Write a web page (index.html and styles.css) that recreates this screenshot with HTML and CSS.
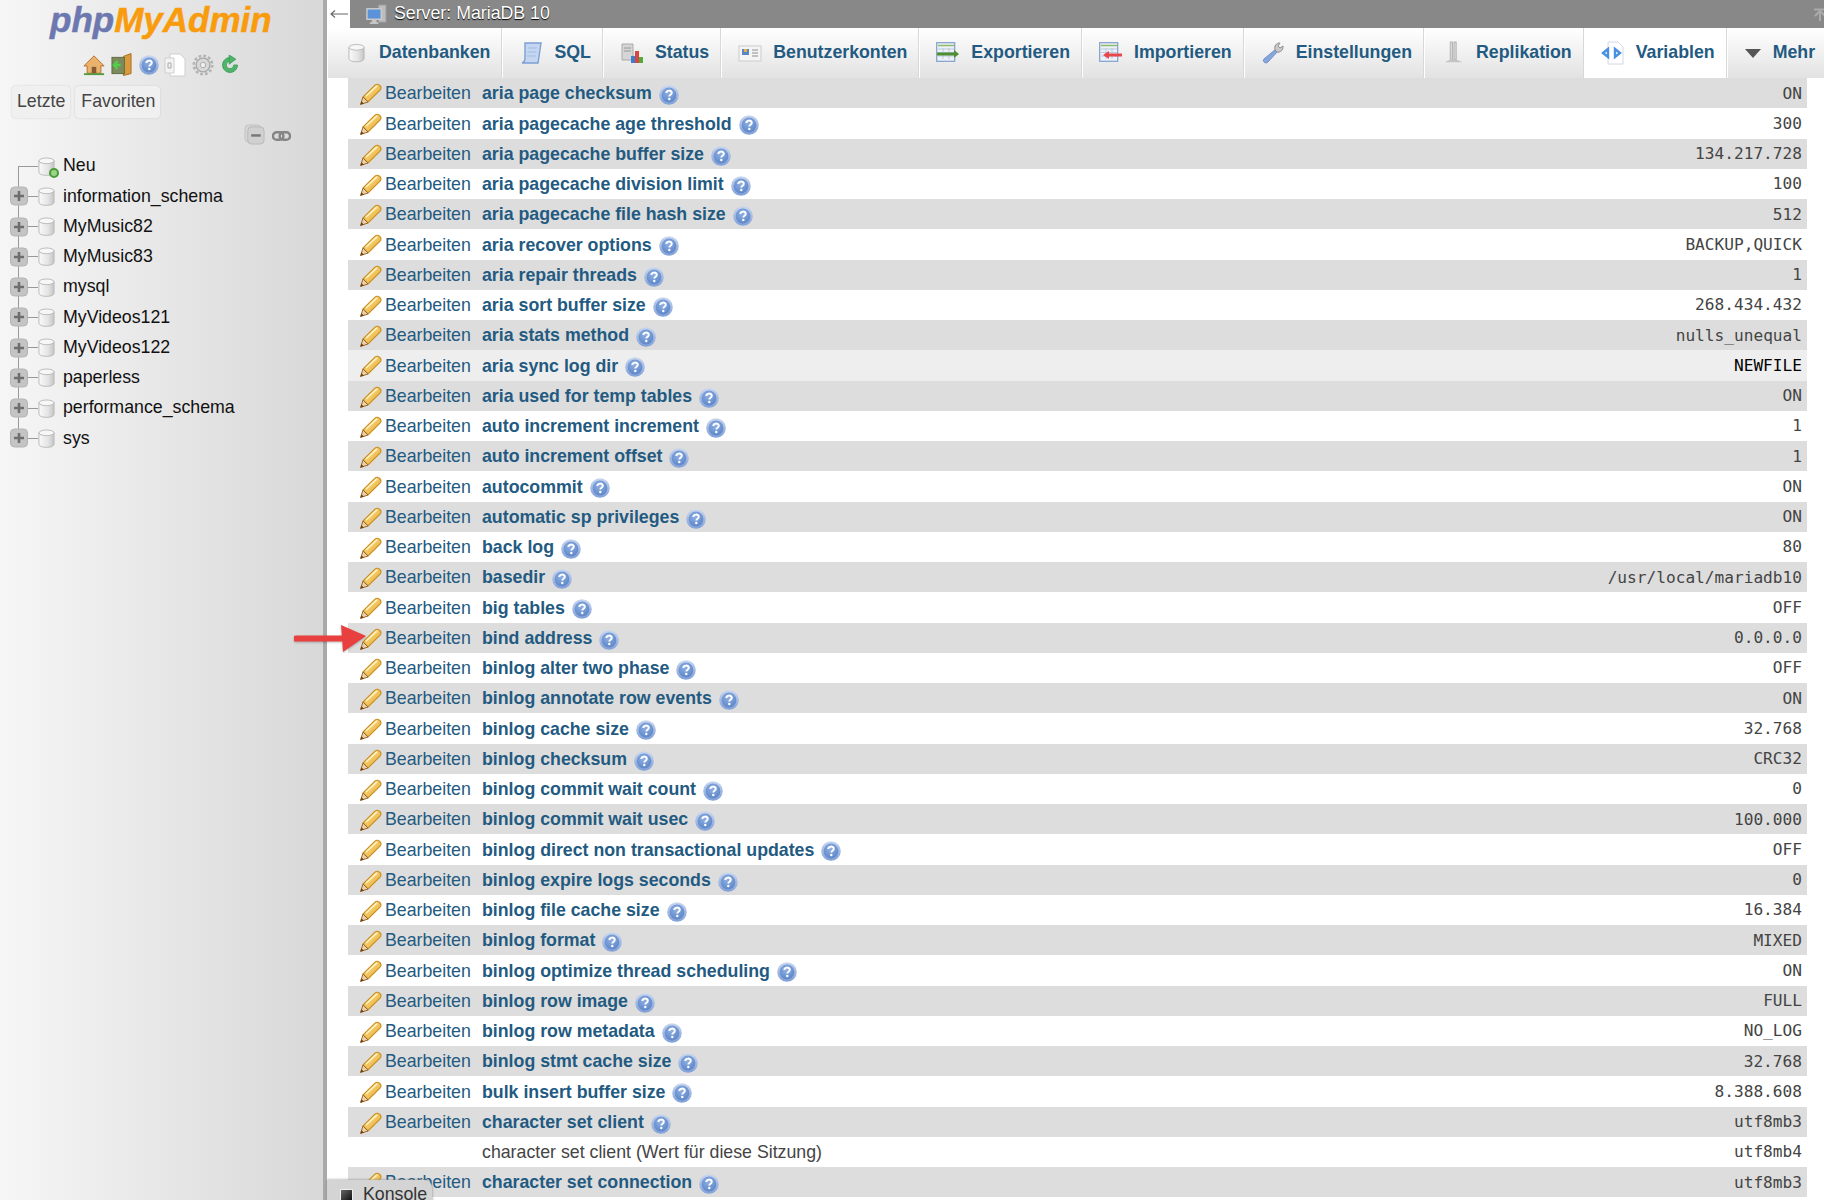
FILE: index.html
```html
<!DOCTYPE html>
<html lang="de">
<head>
<meta charset="utf-8">
<title>phpMyAdmin</title>
<link rel="stylesheet" href="styles.css">
</head>
<body>
<svg class="sprite" aria-hidden="true">
  <defs>
    <linearGradient id="gp" x1="0" y1="0" x2="1" y2="1"><stop offset="0" stop-color="#fde79a"/><stop offset="1" stop-color="#e6a428"/></linearGradient>
    <radialGradient id="gh" cx=".45" cy=".35" r=".7"><stop offset="0" stop-color="#8fb0e4"/><stop offset="1" stop-color="#5b84c6"/></radialGradient>
    <linearGradient id="ghr" x1="0" y1="0" x2="0" y2="1"><stop offset="0" stop-color="#c9d7ef"/><stop offset="1" stop-color="#7f9fd8"/></linearGradient>
    <linearGradient id="gd" x1="0" y1="0" x2="1" y2="0"><stop offset="0" stop-color="#fafafa"/><stop offset=".6" stop-color="#e4e4e4"/><stop offset="1" stop-color="#c4c4c4"/></linearGradient>
    <symbol id="i-pencil" viewBox="0 0 24 24">
      <path d="M4 15 16 3.200c1.500-1.500 3.500-1 4.800.3 1.400 1.400 1.700 3.300.2 4.700L9 20z" fill="url(#gp)" stroke="#c88d1e" stroke-width="1.100"/>
      <path d="M7 14 18 3.800" stroke="#fff3c4" stroke-width="1.600" fill="none"/>
      <path d="M4 15 1.500 22.500 9 20z" fill="#eccfa6" stroke="#9a6a2a" stroke-width="1"/>
      <path d="M1.500 22.500 2.500 19.200 4.800 21.500z" fill="#6b3d12"/>
    </symbol>
    <symbol id="i-help" viewBox="0 0 20 20">
      <circle cx="10" cy="10" r="9.800" fill="url(#ghr)"/>
      <circle cx="10" cy="10" r="7.400" fill="url(#gh)"/>
      <path d="M7.300 8c0-3.200 5.500-3.200 5.500-.2 0 1.900-2.500 1.800-2.500 3.600" fill="none" stroke="#fff" stroke-width="1.900"/>
      <circle cx="10.300" cy="14" r="1.200" fill="#fff"/>
    </symbol>
    <symbol id="i-db" viewBox="0 0 18 20">
      <path d="M1 4v12c0 4.500 16 4.500 16 0V4z" fill="url(#gd)" stroke="#b8b8b8"/>
      <ellipse cx="9" cy="4" rx="8" ry="3" fill="#f7f7f7" stroke="#b8b8b8"/>
    </symbol>
    <symbol id="i-plus" viewBox="0 0 18 20">
      <rect x=".5" y="1" width="17" height="18" rx="4" fill="#c4c4c4" stroke="#b4b4b4"/>
      <path d="M9 5v10M4 10h10" stroke="#6e6e6e" stroke-width="2.600"/>
    </symbol>
    <symbol id="i-sql" viewBox="0 0 22 24">
      <path d="M5 2h16l-3 20H2c3-1 3-3 3-5z" fill="#c4d6f0" stroke="#7d9fd4" stroke-width="1.400"/>
      <path d="M8 7h9M7.500 11h9M7 15h9" stroke="#a3bde4"/>
    </symbol>
    <symbol id="i-status" viewBox="0 0 24 24">
      <path d="M2 3h11v16H2z" fill="#d5d5d5" stroke="#aaa"/>
      <path d="M4 7h7M4 10h7" stroke="#999"/>
      <rect x="11" y="15" width="4" height="7" fill="#3c7fd0"/><rect x="15" y="10" width="4" height="12" fill="#d8453f"/><rect x="19" y="16" width="4" height="6" fill="#55a83a"/>
    </symbol>
    <symbol id="i-users" viewBox="0 0 24 20">
      <rect x="1" y="3" width="22" height="15" fill="#f4f4f4" stroke="#ccc"/>
      <rect x="4" y="6" width="7" height="6" fill="#5a86c8"/><rect x="6" y="6" width="3" height="3" fill="#e5b23d"/>
      <path d="M14 7h6M14 10h6M14 13h6" stroke="#b0b0b0" stroke-width="1.400"/>
    </symbol>
    <symbol id="i-table" viewBox="0 0 20 20">
      <rect x=".7" y=".7" width="18" height="18.600" fill="#eef2f8" stroke="#7f9fcb" stroke-width="1.200"/>
      <path d="M2 3.500h16" stroke="#8cbb6a" stroke-width="1.500"/>
      <path d="M2 7h16M2 10.500h16M2 14h16M7 6v11M13 6v11" stroke="#b8c8de"/>
    </symbol>
    <symbol id="i-export" viewBox="0 0 24 22">
      <use href="#i-table" x="0" y="0" width="20" height="20"/>
      <path d="M1 12h18" stroke="#4f8f2f" stroke-width="3"/><path d="M18 8l5 4-5 4z" fill="#4f8f2f"/>
    </symbol>
    <symbol id="i-import" viewBox="0 0 24 22">
      <use href="#i-table" x="0" y="0" width="20" height="20"/>
      <path d="M8 13h15" stroke="#e8474a" stroke-width="3"/><path d="M10 9l-6 4 6 4z" fill="#e8474a"/>
    </symbol>
    <symbol id="i-wrench" viewBox="0 0 24 24">
      <path d="M15 8 3 18c-2 2 1 5 3.500 3.500L17 10z" fill="#88a6de" stroke="#6f8fcb"/>
      <path d="M14 9c-1-4 1-7 5-7l-2 3 2 2 3-2c.5 4-3 7-6 6z" fill="#c9c9c9" stroke="#8e8e8e"/>
    </symbol>
    <symbol id="i-repl" viewBox="0 0 24 26">
      <path d="M9 1h2.500v19H9zM13 1h2.500v19H13z" fill="#d8d8d8" stroke="#a4a4a4" stroke-width=".8"/>
      <path d="M9 20h7l6 3H3z" fill="#c4c4c4"/>
    </symbol>
    <symbol id="i-vars" viewBox="0 0 24 24">
      <path d="M7 1h10l5 5v17H7z" fill="#fff" stroke="#d2d8e4"/>
      <path d="M7 8 2 12l5 4zM14 8l5 4-5 4z" fill="#fff" stroke="#4a90e0" stroke-width="2.400"/>
    </symbol>
    <symbol id="i-server" viewBox="0 0 22 22">
      <rect x="13" y="1" width="8" height="18" fill="#bdbdbd" stroke="#999"/>
      <rect x="1" y="5" width="15" height="11" fill="#5a93d8" stroke="#ccc" stroke-width="1.500"/>
      <path d="M6 16h5v3H6zM4 19h9v2H4z" fill="#c5c5c5"/>
    </symbol>
    <symbol id="i-home" viewBox="0 0 24 22">
      <path d="M12 1 1 12h3.500v8h15v-8H23z" fill="#e9b36e" stroke="#b66a25"/>
      <rect x="9.500" y="13" width="5" height="7" fill="#8a5a30"/>
      <path d="M1 21h22" stroke="#4f9a3c" stroke-width="2"/>
    </symbol>
    <symbol id="i-exit" viewBox="0 0 22 24">
      <path d="M13 3 21 0v21l-8 2z" fill="#d99a3e" stroke="#a86c1c"/>
      <rect x="1" y="4" width="13" height="17" fill="#7d8a5c" stroke="#5d6a40"/>
      <path d="M3 12h7M7 8l-4 4 4 4" fill="none" stroke="#4fd04a" stroke-width="2.400"/>
    </symbol>
    <symbol id="i-docs" viewBox="0 0 22 24">
      <path d="M6 1h10l5 5v17H6z" fill="#fff" stroke="#cfcfcf"/>
      <path d="M1 5h9v15H1z" fill="#f3f3f3" stroke="#cfcfcf"/>
      <path d="M4 10h3v5H4z" fill="none" stroke="#aaa"/>
    </symbol>
    <symbol id="i-gear" viewBox="0 0 24 24">
      <circle cx="12" cy="12" r="7.500" fill="#d8d8d8" stroke="#a8a8a8" stroke-width="1.500"/>
      <circle cx="12" cy="12" r="10" fill="none" stroke="#b4b4b4" stroke-width="3" stroke-dasharray="3 2.240"/>
      <circle cx="12" cy="12" r="3" fill="#eee" stroke="#a8a8a8"/>
    </symbol>
    <symbol id="i-reload" viewBox="0 0 20 24">
      <path d="M10 3a9 9 0 1 0 9 9h-4.500A4.500 4.500 0 1 1 10 7.500z" fill="#4fb56a" stroke="#3a9a55"/>
      <path d="M9 0l8 5-8 6z" fill="#4fb56a" stroke="#3a9a55"/>
    </symbol>
    <symbol id="i-collapse" viewBox="0 0 22 22">
      <rect x="1" y="1" width="17" height="18" rx="4" fill="#d6d6d6" stroke="#c0c0c0"/>
      <rect x="4" y="3" width="17" height="18" rx="4" fill="#d0d0d0" stroke="#b8b8b8"/>
      <path d="M7.500 12h10" stroke="#777" stroke-width="2.600"/>
    </symbol>
    <symbol id="i-link" viewBox="0 0 20 12">
      <rect x="1" y="2" width="11" height="8" rx="4" fill="none" stroke="#858585" stroke-width="2.600"/>
      <rect x="8" y="2" width="11" height="8" rx="4" fill="none" stroke="#858585" stroke-width="2.600"/>
    </symbol>
    <symbol id="i-back" viewBox="0 0 18 12">
      <path d="M1 6h17M5 2.500 1 6l4 3.500" fill="none" stroke="#666" stroke-width="1.100"/>
    </symbol>
    <symbol id="i-top" viewBox="0 0 12 14">
      <path d="M0 1.500h12M6 13V3M1 8l5-5 5 5" fill="none" stroke="#aaa" stroke-width="2"/>
    </symbol>
  </defs>
</svg>

<div class="app">
  <aside class="nav">
    <div class="logo"><span class="logo-php">php</span><span class="logo-my">MyAdmin</span></div>
    <div class="nav-icons">
      <svg class="ni ni-home"><use href="#i-home"/></svg>
      <svg class="ni ni-exit"><use href="#i-exit"/></svg>
      <svg class="ni ni-help"><use href="#i-help"/></svg>
      <svg class="ni ni-docs"><use href="#i-docs"/></svg>
      <svg class="ni ni-gear"><use href="#i-gear"/></svg>
      <svg class="ni ni-reload"><use href="#i-reload"/></svg>
    </div>
    <div class="nav-btns"><span class="nav-btn">Letzte</span><span class="nav-btn">Favoriten</span></div>
    <div class="nav-ctrl">
      <svg class="ctrl-collapse"><use href="#i-collapse"/></svg>
      <svg class="ctrl-link"><use href="#i-link"/></svg>
    </div>
    <ul class="tree">
      <li class="tree-row tree-first"><span class="exp"></span><span class="dbwrap"><svg class="dbi"><use href="#i-db"/></svg><span class="newdot"></span></span><span>Neu</span></li>
      <li class="tree-row"><svg class="exp"><use href="#i-plus"/></svg><svg class="dbi"><use href="#i-db"/></svg><span>information_schema</span></li>
      <li class="tree-row"><svg class="exp"><use href="#i-plus"/></svg><svg class="dbi"><use href="#i-db"/></svg><span>MyMusic82</span></li>
      <li class="tree-row"><svg class="exp"><use href="#i-plus"/></svg><svg class="dbi"><use href="#i-db"/></svg><span>MyMusic83</span></li>
      <li class="tree-row"><svg class="exp"><use href="#i-plus"/></svg><svg class="dbi"><use href="#i-db"/></svg><span>mysql</span></li>
      <li class="tree-row"><svg class="exp"><use href="#i-plus"/></svg><svg class="dbi"><use href="#i-db"/></svg><span>MyVideos121</span></li>
      <li class="tree-row"><svg class="exp"><use href="#i-plus"/></svg><svg class="dbi"><use href="#i-db"/></svg><span>MyVideos122</span></li>
      <li class="tree-row"><svg class="exp"><use href="#i-plus"/></svg><svg class="dbi"><use href="#i-db"/></svg><span>paperless</span></li>
      <li class="tree-row"><svg class="exp"><use href="#i-plus"/></svg><svg class="dbi"><use href="#i-db"/></svg><span>performance_schema</span></li>
      <li class="tree-row tree-last"><svg class="exp"><use href="#i-plus"/></svg><svg class="dbi"><use href="#i-db"/></svg><span>sys</span></li>
    </ul>
  </aside>

  <main class="main">
    <header class="topbar">
      <span class="back"><svg class="back-ic"><use href="#i-back"/></svg></span>
      <svg class="server-ic"><use href="#i-server"/></svg>
      <span class="server-txt">Server: MariaDB 10</span>
      <svg class="top-end"><use href="#i-top"/></svg>
    </header>
    <nav class="tabs">
      <a class="tab"><span class="tab-ic"><svg class="ic-db"><use href="#i-db"/></svg></span>Datenbanken</a>
      <a class="tab"><span class="tab-ic"><svg class="ic-24"><use href="#i-sql"/></svg></span>SQL</a>
      <a class="tab"><span class="tab-ic"><svg class="ic-24"><use href="#i-status"/></svg></span>Status</a>
      <a class="tab"><span class="tab-ic"><svg class="ic-24"><use href="#i-users"/></svg></span>Benutzerkonten</a>
      <a class="tab"><span class="tab-ic"><svg class="ic-24"><use href="#i-export"/></svg></span>Exportieren</a>
      <a class="tab"><span class="tab-ic"><svg class="ic-24"><use href="#i-import"/></svg></span>Importieren</a>
      <a class="tab"><span class="tab-ic"><svg class="ic-24"><use href="#i-wrench"/></svg></span>Einstellungen</a>
      <a class="tab"><span class="tab-ic"><svg class="ic-24"><use href="#i-repl"/></svg></span>Replikation</a>
      <a class="tab tab-active"><span class="tab-ic"><svg class="ic-24"><use href="#i-vars"/></svg></span>Variablen</a>
      <a class="tab tab-more"><span class="tab-ic"><span class="caret"></span></span>Mehr</a>
    </nav>
    <div class="vars">
      <div class="row"><span class="edit"><svg class="pen"><use href="#i-pencil"/></svg>Bearbeiten</span><span class="name">aria page checksum<svg class="hlp"><use href="#i-help"/></svg></span><span class="val">ON</span></div>
      <div class="row"><span class="edit"><svg class="pen"><use href="#i-pencil"/></svg>Bearbeiten</span><span class="name">aria pagecache age threshold<svg class="hlp"><use href="#i-help"/></svg></span><span class="val">300</span></div>
      <div class="row"><span class="edit"><svg class="pen"><use href="#i-pencil"/></svg>Bearbeiten</span><span class="name">aria pagecache buffer size<svg class="hlp"><use href="#i-help"/></svg></span><span class="val">134.217.728</span></div>
      <div class="row"><span class="edit"><svg class="pen"><use href="#i-pencil"/></svg>Bearbeiten</span><span class="name">aria pagecache division limit<svg class="hlp"><use href="#i-help"/></svg></span><span class="val">100</span></div>
      <div class="row"><span class="edit"><svg class="pen"><use href="#i-pencil"/></svg>Bearbeiten</span><span class="name">aria pagecache file hash size<svg class="hlp"><use href="#i-help"/></svg></span><span class="val">512</span></div>
      <div class="row"><span class="edit"><svg class="pen"><use href="#i-pencil"/></svg>Bearbeiten</span><span class="name">aria recover options<svg class="hlp"><use href="#i-help"/></svg></span><span class="val">BACKUP,QUICK</span></div>
      <div class="row"><span class="edit"><svg class="pen"><use href="#i-pencil"/></svg>Bearbeiten</span><span class="name">aria repair threads<svg class="hlp"><use href="#i-help"/></svg></span><span class="val">1</span></div>
      <div class="row"><span class="edit"><svg class="pen"><use href="#i-pencil"/></svg>Bearbeiten</span><span class="name">aria sort buffer size<svg class="hlp"><use href="#i-help"/></svg></span><span class="val">268.434.432</span></div>
      <div class="row"><span class="edit"><svg class="pen"><use href="#i-pencil"/></svg>Bearbeiten</span><span class="name">aria stats method<svg class="hlp"><use href="#i-help"/></svg></span><span class="val">nulls_unequal</span></div>
      <div class="row row-hover"><span class="edit"><svg class="pen"><use href="#i-pencil"/></svg>Bearbeiten</span><span class="name">aria sync log dir<svg class="hlp"><use href="#i-help"/></svg></span><span class="val">NEWFILE</span></div>
      <div class="row"><span class="edit"><svg class="pen"><use href="#i-pencil"/></svg>Bearbeiten</span><span class="name">aria used for temp tables<svg class="hlp"><use href="#i-help"/></svg></span><span class="val">ON</span></div>
      <div class="row"><span class="edit"><svg class="pen"><use href="#i-pencil"/></svg>Bearbeiten</span><span class="name">auto increment increment<svg class="hlp"><use href="#i-help"/></svg></span><span class="val">1</span></div>
      <div class="row"><span class="edit"><svg class="pen"><use href="#i-pencil"/></svg>Bearbeiten</span><span class="name">auto increment offset<svg class="hlp"><use href="#i-help"/></svg></span><span class="val">1</span></div>
      <div class="row"><span class="edit"><svg class="pen"><use href="#i-pencil"/></svg>Bearbeiten</span><span class="name">autocommit<svg class="hlp"><use href="#i-help"/></svg></span><span class="val">ON</span></div>
      <div class="row"><span class="edit"><svg class="pen"><use href="#i-pencil"/></svg>Bearbeiten</span><span class="name">automatic sp privileges<svg class="hlp"><use href="#i-help"/></svg></span><span class="val">ON</span></div>
      <div class="row"><span class="edit"><svg class="pen"><use href="#i-pencil"/></svg>Bearbeiten</span><span class="name">back log<svg class="hlp"><use href="#i-help"/></svg></span><span class="val">80</span></div>
      <div class="row"><span class="edit"><svg class="pen"><use href="#i-pencil"/></svg>Bearbeiten</span><span class="name">basedir<svg class="hlp"><use href="#i-help"/></svg></span><span class="val">/usr/local/mariadb10</span></div>
      <div class="row"><span class="edit"><svg class="pen"><use href="#i-pencil"/></svg>Bearbeiten</span><span class="name">big tables<svg class="hlp"><use href="#i-help"/></svg></span><span class="val">OFF</span></div>
      <div class="row"><span class="edit"><svg class="pen"><use href="#i-pencil"/></svg>Bearbeiten</span><span class="name">bind address<svg class="hlp"><use href="#i-help"/></svg></span><span class="val">0.0.0.0</span></div>
      <div class="row"><span class="edit"><svg class="pen"><use href="#i-pencil"/></svg>Bearbeiten</span><span class="name">binlog alter two phase<svg class="hlp"><use href="#i-help"/></svg></span><span class="val">OFF</span></div>
      <div class="row"><span class="edit"><svg class="pen"><use href="#i-pencil"/></svg>Bearbeiten</span><span class="name">binlog annotate row events<svg class="hlp"><use href="#i-help"/></svg></span><span class="val">ON</span></div>
      <div class="row"><span class="edit"><svg class="pen"><use href="#i-pencil"/></svg>Bearbeiten</span><span class="name">binlog cache size<svg class="hlp"><use href="#i-help"/></svg></span><span class="val">32.768</span></div>
      <div class="row"><span class="edit"><svg class="pen"><use href="#i-pencil"/></svg>Bearbeiten</span><span class="name">binlog checksum<svg class="hlp"><use href="#i-help"/></svg></span><span class="val">CRC32</span></div>
      <div class="row"><span class="edit"><svg class="pen"><use href="#i-pencil"/></svg>Bearbeiten</span><span class="name">binlog commit wait count<svg class="hlp"><use href="#i-help"/></svg></span><span class="val">0</span></div>
      <div class="row"><span class="edit"><svg class="pen"><use href="#i-pencil"/></svg>Bearbeiten</span><span class="name">binlog commit wait usec<svg class="hlp"><use href="#i-help"/></svg></span><span class="val">100.000</span></div>
      <div class="row"><span class="edit"><svg class="pen"><use href="#i-pencil"/></svg>Bearbeiten</span><span class="name">binlog direct non transactional updates<svg class="hlp"><use href="#i-help"/></svg></span><span class="val">OFF</span></div>
      <div class="row"><span class="edit"><svg class="pen"><use href="#i-pencil"/></svg>Bearbeiten</span><span class="name">binlog expire logs seconds<svg class="hlp"><use href="#i-help"/></svg></span><span class="val">0</span></div>
      <div class="row"><span class="edit"><svg class="pen"><use href="#i-pencil"/></svg>Bearbeiten</span><span class="name">binlog file cache size<svg class="hlp"><use href="#i-help"/></svg></span><span class="val">16.384</span></div>
      <div class="row"><span class="edit"><svg class="pen"><use href="#i-pencil"/></svg>Bearbeiten</span><span class="name">binlog format<svg class="hlp"><use href="#i-help"/></svg></span><span class="val">MIXED</span></div>
      <div class="row"><span class="edit"><svg class="pen"><use href="#i-pencil"/></svg>Bearbeiten</span><span class="name">binlog optimize thread scheduling<svg class="hlp"><use href="#i-help"/></svg></span><span class="val">ON</span></div>
      <div class="row"><span class="edit"><svg class="pen"><use href="#i-pencil"/></svg>Bearbeiten</span><span class="name">binlog row image<svg class="hlp"><use href="#i-help"/></svg></span><span class="val">FULL</span></div>
      <div class="row"><span class="edit"><svg class="pen"><use href="#i-pencil"/></svg>Bearbeiten</span><span class="name">binlog row metadata<svg class="hlp"><use href="#i-help"/></svg></span><span class="val">NO_LOG</span></div>
      <div class="row"><span class="edit"><svg class="pen"><use href="#i-pencil"/></svg>Bearbeiten</span><span class="name">binlog stmt cache size<svg class="hlp"><use href="#i-help"/></svg></span><span class="val">32.768</span></div>
      <div class="row"><span class="edit"><svg class="pen"><use href="#i-pencil"/></svg>Bearbeiten</span><span class="name">bulk insert buffer size<svg class="hlp"><use href="#i-help"/></svg></span><span class="val">8.388.608</span></div>
      <div class="row"><span class="edit"><svg class="pen"><use href="#i-pencil"/></svg>Bearbeiten</span><span class="name">character set client<svg class="hlp"><use href="#i-help"/></svg></span><span class="val">utf8mb3</span></div>
      <div class="row"><span class="edit"></span><span class="name name-plain">character set client (Wert für diese Sitzung)</span><span class="val">utf8mb4</span></div>
      <div class="row"><span class="edit"><svg class="pen"><use href="#i-pencil"/></svg>Bearbeiten</span><span class="name">character set connection<svg class="hlp"><use href="#i-help"/></svg></span><span class="val">utf8mb3</span></div>
    </div>
  </main>
</div>

<svg class="arrow" viewBox="0 0 74 32" aria-hidden="true"><path d="M2 16.500h46" stroke="#e8403f" stroke-width="6" stroke-linecap="round"/><path d="M47 3 72 14 49 30z" fill="#e8403f"/></svg>
<div class="console"><span class="console-ic"></span>Konsole</div>
</body>
</html>
```
FILE: styles.css
```css
* { box-sizing: border-box; }
html, body { margin: 0; height: 1200px; overflow: hidden; background: #fff; }
body { font: 17.750px/1.2 "Liberation Sans", Arial, sans-serif; color: #444; position: relative; }
.sprite { width: 0; height: 0; display: block; }
svg { display: block; flex: none; }

.app { display: flex; height: 1200px; }

/* navigation */
.nav { width: 327px; flex: none; height: 100%; border-right: 4px solid #a9a9a9; background: linear-gradient(to right, #f6f6f6, #d8d8d8); }
.logo { height: 48px; padding-left: 50px; font: italic bold 35px/40px "Liberation Sans", sans-serif; white-space: nowrap; -webkit-text-stroke: .5px; }
.logo-php { color: #6c78af; }
.logo-my { color: #f89c0e; }
.nav-icons { display: flex; align-items: center; padding-left: 83px; height: 34px; }
.ni { width: 22px; height: 24px; margin-right: 6px; }
.ni-exit { width: 21px; }
.ni-help { width: 20px; height: 20px; margin-left: 1px; margin-right: 5px; }
.ni-gear { margin-right: 7px; }
.ni-reload { width: 18px; height: 20px; }
.nav-btns { display: flex; gap: 4px; padding: 4px 0 0 12px; height: 36px; }
.nav-btn { height: 32px; line-height: 31px; padding: 0 5px; background: #f0f0f0; border-radius: 4px; box-shadow: 0 0 2px #c8c8c8; color: #444; }
.nav-btn + .nav-btn { padding: 0 5px 0 6px; margin-left: 1px; }
.nav-ctrl { display: flex; align-items: center; gap: 7px; padding-left: 244px; height: 30px; margin-top: 1px; }
.ctrl-collapse { width: 21px; height: 21px; }
.ctrl-link { width: 19px; height: 12px; margin-top: 3px; }
.tree { list-style: none; margin: 2px 0 0; padding: 0; }
.tree-row { display: flex; align-items: center; height: 30.25px; padding-left: 10px; color: #111;
  background: linear-gradient(#999, #999) 18px 0 / 1px 100% no-repeat, linear-gradient(#999, #999) 18px 50% / 20px 1px no-repeat; }
.tree-first { background: linear-gradient(#999, #999) 18px 100% / 1px 50% no-repeat, linear-gradient(#999, #999) 18px 50% / 20px 1px no-repeat; }
.tree-last { background: linear-gradient(#999, #999) 18px 0 / 1px 50% no-repeat, linear-gradient(#999, #999) 18px 50% / 20px 1px no-repeat; }
.exp { width: 18px; height: 20px; margin-right: 10px; flex: none; }
.dbi { width: 17px; height: 19px; margin-right: 8px; flex: none; }
.dbwrap { position: relative; flex: none; }
.newdot { position: absolute; left: 11px; top: 11px; width: 10px; height: 10px; border-radius: 50%; background: #9bd48a; border: 2px solid #4a9a35; }

/* main */
.main { flex: 1; min-width: 0; display: flex; flex-direction: column; }
.topbar { height: 28px; flex: none; display: flex; align-items: center; background: #888; color: #fff; }
.back { width: 23px; height: 28px; background: #fff; display: flex; align-items: center; justify-content: center; }
.back-ic { width: 18px; height: 12px; }
.server-ic { width: 21px; height: 21px; margin-left: 16px; margin-right: 7px; }
.server-txt { text-shadow: 0 1px 1px #000; }
.top-end { width: 12px; height: 14px; margin-left: auto; margin-right: -2px; margin-top: 2px; }
.tabs { height: 50px; flex: none; display: flex; background: linear-gradient(#fff, #e2e2e2); overflow: hidden; }
.tab { display: flex; align-items: center; height: 100%; padding: 0 11px 0 16px; font-weight: bold; color: #235a81; white-space: nowrap; border-right: 1px solid #d8d8d8; border-left: 1px solid #fff; }
.tab-ic { width: 24px; margin-right: 11px; flex: none; display: flex; justify-content: center; }
.ic-db { width: 17px; height: 20px; }
.ic-24 { width: 24px; height: 24px; }
.tab-active { background: #fff; }
.tab-more { border-right: 0; }
.tab-more .tab-ic { width: 18px; }
.caret { width: 0; height: 0; margin-top: 1px; border-left: 8px solid transparent; border-right: 8px solid transparent; border-top: 9px solid #555; }

.vars { margin: 0 17px 0 21px; }
.row { display: flex; align-items: center; height: 30.25px; }
.row:nth-child(odd) { background: #ddd; }
.row-hover { background: #eee; }
.row-hover .val { color: #000; }
.edit { width: 134px; height: 100%; flex: none; display: flex; align-items: center; padding: 2px 0 0 11px; color: #235a81; }
.pen { width: 24px; height: 24px; margin-right: 2px; }
.name { display: flex; align-items: center; height: 100%; padding-top: 2px; font-weight: bold; color: #235a81; white-space: nowrap; }
.name-plain { font-weight: normal; color: #444; }
.hlp { width: 20px; height: 20px; margin-left: 7px; margin-top: 2px; }
.val { margin-left: auto; padding-right: 5px; font: 16.150px "DejaVu Sans Mono", monospace; color: #444; white-space: pre; }

/* overlays */
.arrow { position: absolute; left: 294px; top: 622px; width: 74px; height: 32px; filter: drop-shadow(0 1px 1px rgba(0,0,0,.25)); }
.console { position: absolute; left: 327px; top: 1180px; width: 105px; height: 30px; padding-left: 13px; display: flex; align-items: flex-start; gap: 10px; line-height: 24px; padding-top: 2px; background: #d4d4d4; border-top-right-radius: 8px; box-shadow: 0 0 3px #888; color: #333; }
.console-ic { width: 13px; height: 16px; margin-top: 7px; background: linear-gradient(135deg, #666, #000); border: 1px solid #eee; }
```
